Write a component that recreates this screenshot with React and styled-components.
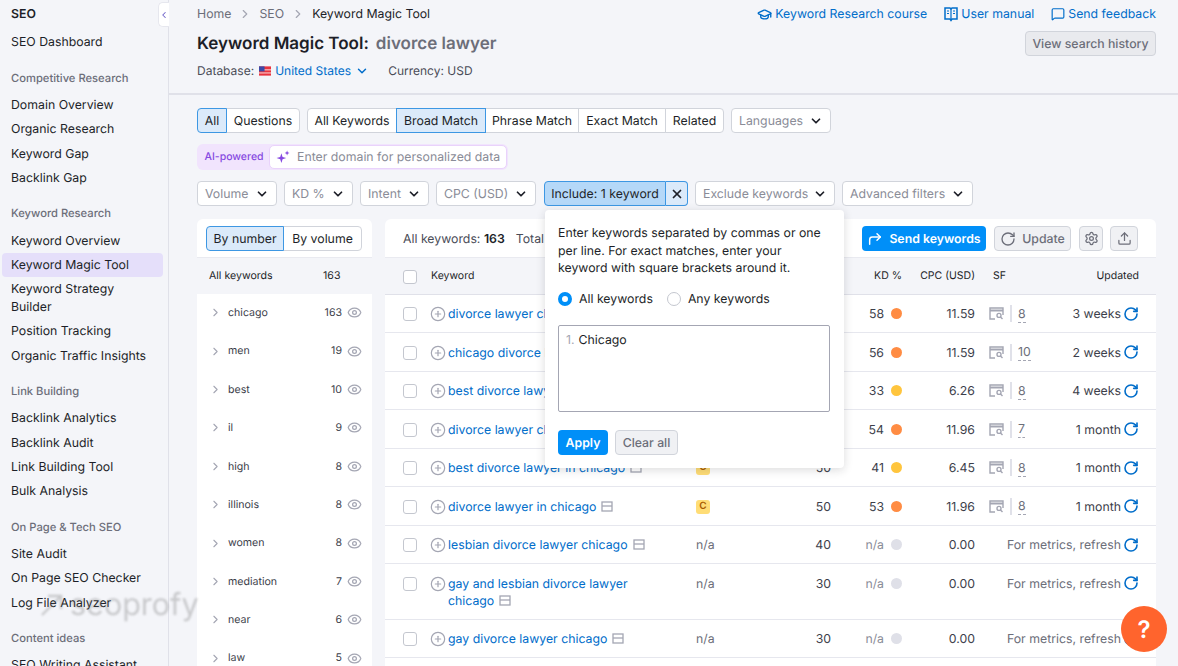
import React from 'react';
import styled, { createGlobalStyle } from 'styled-components';
import {
  ChevronDown,
  ChevronLeft,
  ChevronRight,
  CirclePlus,
  CornerUpRight,
  Eye,
  GraduationCap,
  MessageSquare,
  RotateCw,
  Settings,
  Upload,
  X,
} from 'lucide-react';

const BASE = '12.3px Inter, "Liberation Sans", sans-serif';

const GlobalStyle = createGlobalStyle`
  html, body {
    margin: 0;
    padding: 0;
    height: 100%;
    overflow: hidden;
  }
  body {
    background: #f4f5f9;
    color: #1d1f28;
    font: ${BASE};
    line-height: 17.5px;
    text-rendering: geometricPrecision;
  }
  button {
    text-rendering: geometricPrecision;
    white-space: nowrap;
  }
  * {
    box-sizing: border-box;
  }
`;

const Page = styled.div`
  position: relative;
  display: flex;
  width: 1178px;
  height: 666px;
  overflow: hidden;
`;

/* sidebar */
const Sidebar = styled.nav`
  position: relative;
  flex: 0 0 169px;
  padding: 5px 5px 0 2px;
  border-right: 1px solid #e0e1e9;
`;

const SideTitle = styled.div`
  padding-left: 9px;
  margin-bottom: 7.5px;
  font-weight: 600;
  color: #1d1f28;
`;

const SideLabel = styled.div`
  height: 16px;
  margin: 15.4px 0 6.8px;
  padding-left: 9px;
  font-size: 11.2px;
  line-height: 16px;
  font-weight: 500;
  color: #6c6e79;
`;

const SideItem = styled.a`
  display: block;
  padding: 3.45px 9px;
  border-radius: 4px;
  color: #1d1f28;
  background: ${(p) => (p.$active ? '#e5dffa' : 'transparent')};
`;

const DashboardItem = styled(SideItem)`
  margin-bottom: 1px;
`;

const CollapseTab = styled.button`
  position: absolute;
  top: 2px;
  right: -1px;
  width: 11px;
  height: 25px;
  padding: 0;
  display: flex;
  align-items: center;
  justify-content: center;
  border: 1px solid #e6e7ee;
  border-right: 0;
  border-radius: 5px 0 0 5px;
  background: #fff;
  color: #6f63c9;
`;

/* page header */
const Main = styled.main`
  flex: 1;
  min-width: 0;
`;

const Header = styled.header`
  height: 95px;
  padding: 0 22px 0 28px;
  border-bottom: 2px solid #e0e1e9;
`;

const HeaderTop = styled.div`
  display: flex;
  justify-content: space-between;
  align-items: center;
  height: 28px;
`;

const Crumbs = styled.div`
  display: flex;
  align-items: center;
  gap: 7px;
  color: #6c6e79;
`;

const CrumbCurrent = styled.span`
  color: #1d1f28;
`;

const HelpLinks = styled.div`
  display: flex;
  align-items: center;
  gap: 17px;
`;

const HelpLink = styled.a`
  display: flex;
  align-items: center;
  gap: 3px;
  color: #006dca;
`;

const HeaderBody = styled.div`
  display: flex;
  justify-content: space-between;
  align-items: flex-start;
  margin-top: 1px;
`;

const Title = styled.h1`
  margin: 0;
  height: 30px;
  font-size: 17px;
  line-height: 30px;
  font-weight: 600;
  color: #1d1f28;
`;

const TitleQuery = styled.span`
  margin-left: 7px;
  color: #6c6e79;
`;

const DbRow = styled.div`
  display: flex;
  align-items: center;
  height: 24px;
  font-size: 12px;
  color: #4a4c57;
`;

const DbLink = styled.a`
  display: flex;
  align-items: center;
  gap: 4px;
  margin: 0 19px 0 5px;
  color: #006dca;
`;

const HistoryButton = styled.button`
  width: 131px;
  height: 25px;
  margin-top: 2px;
  padding: 0;
  border: 1px solid #d1d4db;
  border-radius: 4px;
  background: #e9eaee;
  color: #6c6e79;
  font: 500 ${BASE};
`;

/* filters */
const Content = styled.div`
  padding: 13px 22px 0 28px;
`;

const FilterRow = styled.div`
  display: flex;
  align-items: center;
  gap: 7px;
  height: 25px;
  margin-bottom: ${(p) => p.$after || 11}px;
`;

const Segments = styled.div`
  display: flex;
  height: 25px;
`;

const Segment = styled.button`
  position: relative;
  z-index: ${(p) => (p.$active ? 1 : 0)};
  height: 25px;
  width: ${(p) => p.$w}px;
  padding: 0;
  margin-left: -1px;
  border: 1px solid ${(p) => (p.$active ? '#3d97e3' : '#d1d4db')};
  background: ${(p) => (p.$active ? '#dbeafa' : '#fff')};
  color: #1d1f28;
  font: ${BASE};
  &:first-child {
    margin-left: 0;
    border-radius: 4px 0 0 4px;
  }
  &:last-child {
    border-radius: 0 4px 4px 0;
  }
`;

const Select = styled.button`
  display: flex;
  align-items: center;
  justify-content: space-between;
  width: ${(p) => p.$w}px;
  height: 25px;
  padding: 0 7px;
  border: 1px solid #d1d4db;
  border-radius: 4px;
  background: #fff;
  color: #8a8c97;
  font: ${BASE};
  svg {
    color: #1d1f28;
  }
`;

const AiBar = styled.div`
  display: flex;
  align-items: center;
  width: 311px;
  height: 26px;
  padding: 1px;
  border-radius: 6px;
  background: #f1e4fd;
`;

const AiLabel = styled.span`
  flex: 0 0 71px;
  padding-left: 6.5px;
  font-size: 10.5px;
  font-weight: 500;
  color: #8649e1;
`;

const AiInput = styled.div`
  flex: 1;
  display: flex;
  align-items: center;
  gap: 7px;
  height: 24px;
  padding-left: 6px;
  border: 1px solid #e9d3fb;
  border-radius: 5px;
  background: #fff;
  color: #8a8c97;
`;

const IncludeWrap = styled.div`
  position: relative;
  display: flex;
  margin-left: 1px;
  height: 25px;
`;

const IncludeLabel = styled.button`
  width: 122px;
  height: 25px;
  padding: 0;
  border: 1px solid #3d97e3;
  border-radius: 4px 0 0 4px;
  background: #b5d8f8;
  color: #1d1f28;
  font: ${BASE};
`;

const IncludeClear = styled.button`
  display: flex;
  align-items: center;
  justify-content: center;
  width: 22px;
  height: 25px;
  padding: 0;
  border: 1px solid #3d97e3;
  border-left: 0;
  border-radius: 0 4px 4px 0;
  background: #dbeafa;
  color: #1d1f28;
`;

/* include popover */
const Popover = styled.div`
  position: absolute;
  z-index: 5;
  top: 29px;
  left: 1px;
  width: 299px;
  height: 258px;
  padding: 14px 14px 0 13px;
  border-radius: 4px;
  background: #fff;
  box-shadow: 0 2px 10px rgba(29, 31, 40, 0.16);
`;

const PopoverText = styled.p`
  margin: 0;
  color: #1d1f28;
`;

const RadioRow = styled.div`
  display: flex;
  gap: 14px;
  margin-top: 13.5px;
`;

const RadioLabel = styled.label`
  display: flex;
  align-items: center;
  gap: 7px;
`;

const Radio = styled.span`
  width: 14px;
  height: 14px;
  border-radius: 50%;
  background: #fff;
  border: ${(p) => (p.$on ? '4.5px solid #008ff8' : '1px solid #c4c7cf')};
`;

const KeywordBox = styled.div`
  height: 87px;
  margin-top: 17.5px;
  padding: 5px 7px;
  border: 1px solid #a4a6b3;
  border-radius: 2px;
`;

const LineNo = styled.span`
  margin-right: 4px;
  color: #a4a6b3;
`;

const PopoverActions = styled.div`
  display: flex;
  gap: 7px;
  margin-top: 18px;
`;

const PrimaryButton = styled.button`
  display: flex;
  align-items: center;
  justify-content: center;
  gap: 6px;
  width: ${(p) => p.$w}px;
  height: 25px;
  padding: 0;
  border: 0;
  border-radius: 4px;
  background: #008ff8;
  color: #fff;
  font: 600 ${BASE};
`;

const GhostButton = styled.button`
  display: flex;
  align-items: center;
  justify-content: center;
  gap: 6px;
  width: ${(p) => p.$w}px;
  height: 25px;
  padding: 0;
  border: 1px solid #d1d4db;
  border-radius: 4px;
  background: #f0f1f4;
  color: #6c6e79;
  font: 500 ${BASE};
`;

/* panels */
const Panels = styled.div`
  display: grid;
  grid-template-columns: 175px 771px;
  gap: 13px;
  margin-top: 13px;
`;

const Panel = styled.section`
  border-radius: 6px 6px 0 0;
  background: #fff;
  overflow: hidden;
`;

const PanelBar = styled.div`
  display: flex;
  align-items: center;
  height: 38px;
  padding: ${(p) => (p.$wide ? '1px 18px 0' : '0 9px')};
`;

const GroupHead = styled.div`
  display: flex;
  align-items: center;
  height: 36.5px;
  padding-left: 12px;
  border-top: 1px solid #e9eaf0;
  background: #f4f5f9;
  font-size: 10.6px;
`;

const GroupHeadName = styled.span`
  flex: 0 0 114px;
`;

const GroupRow = styled.div`
  display: flex;
  align-items: center;
  height: 38.4px;
  padding-left: 12px;
  font-size: 10.6px;
  color: #3c3e4a;
  svg {
    color: #a4a6b3;
  }
`;

const GroupName = styled.span`
  flex: 1;
  margin-left: 6px;
`;

const GroupCount = styled.span`
  margin-right: 5px;
`;

const GroupEye = styled(Eye)`
  margin-right: 10px;
`;

const TotalsText = styled.span`
  color: #4a4c57;
`;

const TotalsLabel = styled.span`
  margin-left: 11px;
  color: #4a4c57;
`;

const Strong = styled.b`
  font-weight: 600;
  color: #1d1f28;
`;

const BarActions = styled.div`
  display: flex;
  align-items: center;
  gap: 8px;
  margin-left: auto;
`;

const ExportButton = styled(GhostButton)`
  margin-left: -1px;
`;

const columns = '28px 265px 90px 45px 71px 73px 14px 51px 99px';

const TableHead = styled.div`
  display: grid;
  grid-template-columns: ${columns};
  align-items: center;
  height: 37.5px;
  padding-left: 18px;
  border-top: 1px solid #e9eaf0;
  border-bottom: 1px solid #e0e1e9;
  background: #f4f5f9;
  font-size: 10.5px;
`;

const HeadCell = styled.span`
  grid-column: ${(p) => p.$col};
  text-align: ${(p) => p.$align || 'left'};
  padding-left: ${(p) => p.$pad || 0}px;
`;

const Row = styled.div`
  display: grid;
  grid-template-columns: ${columns};
  align-items: start;
  padding: 10.5px 0 9.5px 18px;
  border-bottom: 1px solid #e6e7ee;
`;

const Check = styled.span`
  display: block;
  width: 14px;
  height: 14px;
  margin-top: 2px;
  border: 1px solid #c4c7cf;
  border-radius: 3px;
  background: #fff;
`;

const KeywordCell = styled.div`
  display: flex;
  gap: 2px;
  margin-left: -1px;
  padding-right: 30px;
  line-height: 17.3px;
  svg:first-child {
    flex: none;
    margin-top: 1px;
    color: #a4a6b3;
  }
`;

const KeywordLink = styled.a`
  color: #006dca;
`;

const CardIcon = styled.svg`
  display: inline-block;
  margin-left: 5px;
  vertical-align: -1px;
`;

const IntentBadge = styled.span`
  display: flex;
  align-items: center;
  justify-content: center;
  justify-self: start;
  width: 14px;
  height: 14px;
  margin-top: 2px;
  border-radius: 3px;
  background: #ffdd76;
  color: #a85a00;
  font-size: 10px;
  font-weight: 600;
`;

const Muted = styled.span`
  color: #6c6e79;
`;

const Num = styled.span`
  text-align: right;
  color: #3c3e4a;
`;

const KdCell = styled.span`
  display: flex;
  align-items: center;
  justify-content: flex-end;
  gap: 7px;
  height: 17.5px;
  color: ${(p) => (p.$empty ? '#8a8c97' : '#3c3e4a')};
`;

const KdDot = styled.i`
  width: 11px;
  height: 11px;
  border-radius: 50%;
  background: ${(p) => p.$color};
`;

const SfCell = styled.span`
  grid-column: 8;
  display: flex;
  align-items: center;
  height: 17.5px;
  svg {
    color: #a4a6b3;
  }
`;

const SfRule = styled.i`
  width: 2px;
  height: 17px;
  margin: 0 6px;
  background: #e0e1e9;
`;

const SfCount = styled.span`
  border-bottom: 1px dashed #a4a6b3;
  color: #6c6e79;
  line-height: 17px;
`;

const UpdatedCell = styled.span`
  grid-column: ${(p) => (p.$wide ? '7 / 10' : '9')};
  display: flex;
  justify-content: flex-end;
  align-items: center;
  gap: 2px;
  height: 17.5px;
  color: ${(p) => (p.$wide ? '#6c6e79' : '#3c3e4a')};
  svg {
    color: #006dca;
  }
`;

/* floating bits */
const Watermark = styled.div`
  position: absolute;
  z-index: 8;
  left: 40px;
  top: 585px;
  display: flex;
  align-items: center;
  gap: 6px;
  font-size: 30.5px;
  line-height: 40px;
  color: rgba(110, 110, 110, 0.32);
  filter: blur(0.8px);
  pointer-events: none;
`;

const HelpButton = styled.button`
  position: absolute;
  z-index: 9;
  left: 1121px;
  top: 606px;
  width: 46px;
  height: 46px;
  padding: 0;
  border: 0;
  border-radius: 50%;
  background: #ff642d;
  color: #fff;
  font: 600 24px Inter, sans-serif;
`;

const sideNav = [
  { label: 'Competitive Research', items: ['Domain Overview', 'Organic Research', 'Keyword Gap', 'Backlink Gap'] },
  { label: 'Keyword Research', items: ['Keyword Overview', 'Keyword Magic Tool', 'Keyword Strategy Builder', 'Position Tracking', 'Organic Traffic Insights'] },
  { label: 'Link Building', items: ['Backlink Analytics', 'Backlink Audit', 'Link Building Tool', 'Bulk Analysis'] },
  { label: 'On Page & Tech SEO', items: ['Site Audit', 'On Page SEO Checker', 'Log File Analyzer'] },
  { label: 'Content ideas', items: ['SEO Writing Assistant'] },
];

const groups = [
  ['chicago', 163], ['men', 19], ['best', 10], ['il', 9], ['high', 8],
  ['illinois', 8], ['women', 8], ['mediation', 7], ['near', 6], ['law', 5],
];

const ORANGE = '#ff8c43';
const YELLOW = '#ffc53d';
const GREY = '#dfe0e8';

const keywords = [
  { name: 'divorce lawyer chicago', volume: 70, kd: 58, dot: ORANGE, cpc: '11.59', sf: 8, updated: '3 weeks' },
  { name: 'chicago divorce lawyer', volume: 70, kd: 56, dot: ORANGE, cpc: '11.59', sf: 10, updated: '2 weeks' },
  { name: 'best divorce lawyer chicago', volume: 70, kd: 33, dot: YELLOW, cpc: '6.26', sf: 8, updated: '4 weeks' },
  { name: 'divorce lawyer chicago il', volume: 50, kd: 54, dot: ORANGE, cpc: '11.96', sf: 7, updated: '1 month' },
  { name: 'best divorce lawyer in chicago', volume: 50, kd: 41, dot: YELLOW, cpc: '6.45', sf: 8, updated: '1 month' },
  { name: 'divorce lawyer in chicago', volume: 50, kd: 53, dot: ORANGE, cpc: '11.96', sf: 8, updated: '1 month' },
  { name: 'lesbian divorce lawyer chicago', volume: 40 },
  { name: 'gay and lesbian divorce lawyer chicago', volume: 30 },
  { name: 'gay divorce lawyer chicago', volume: 30 },
];

const Chevron = () => <ChevronDown size={14} strokeWidth={3} />;

const Card = () => (
  <CardIcon width="12" height="11" viewBox="0 0 12 11" fill="none" stroke="#a4a6b3" strokeWidth="1.3">
    <rect x="1" y="1" width="10" height="9" />
    <path d="M1 5h10" />
  </CardIcon>
);

const SerpIcon = () => (
  <svg width="15" height="13" viewBox="0 0 15 13" fill="none" stroke="currentColor" strokeWidth="1.4">
    <path d="M6 12H1V1h13v7" />
    <path d="M1 3.5h13" strokeWidth="2" />
    <circle cx="10" cy="8.4" r="2" />
    <path d="M11.5 10l2 2" />
  </svg>
);

const BookIcon = () => (
  <svg width="14" height="15" viewBox="0 0 14 15" fill="none" stroke="currentColor" strokeWidth="1.5">
    <path d="M1 1h5l1 1 1-1h5v11H8l-1 1.5L6 12H1z" />
    <path d="M7 2v10M3 4h2M3 6.5h2M9 4h2M9 6.5h2" strokeWidth="1.2" />
  </svg>
);

const SparkIcon = () => (
  <svg width="14" height="14" viewBox="0 0 13 13" fill="#8649e1">
    <path d="M5 3l1.1 3.4L9.5 7.5 6.1 8.6 5 12 3.9 8.6.5 7.5l3.4-1.1z" />
    <path d="M10.3 .5l.6 1.7 1.6.6-1.6.6-.6 1.7-.6-1.7-1.6-.6 1.6-.6z" />
  </svg>
);

const Flag = () => (
  <svg width="12" height="10" viewBox="0 0 13 10">
    <rect width="13" height="10" fill="#e8343f" />
    <rect y="3" width="13" height="1.4" fill="#f5b5b8" />
    <rect y="6.4" width="13" height="1.4" fill="#f5b5b8" />
    <rect width="6" height="5.4" fill="#3a4aa8" />
  </svg>
);

const Arrow = () => (
  <svg width="24" height="22" viewBox="0 0 24 22" fill="none" stroke="currentColor" strokeWidth="2.4">
    <path d="M2 21L20 3M8 2h13v13" />
  </svg>
);

const KeywordRow = ({ row }) => (
  <Row>
    <Check />
    <KeywordCell>
      <CirclePlus size={16} strokeWidth={1.8} />
      <span>
        <KeywordLink>{row.name}</KeywordLink>
        <Card />
      </span>
    </KeywordCell>
    {row.kd ? <IntentBadge>C</IntentBadge> : <Muted>n/a</Muted>}
    <Num>{row.volume}</Num>
    {row.kd ? (
      <KdCell>{row.kd}<KdDot $color={row.dot} /></KdCell>
    ) : (
      <KdCell $empty>n/a<KdDot $color={GREY} /></KdCell>
    )}
    <Num>{row.cpc || '0.00'}</Num>
    {row.kd && (
      <SfCell>
        <SerpIcon />
        <SfRule />
        <SfCount>{row.sf}</SfCount>
      </SfCell>
    )}
    <UpdatedCell $wide={!row.kd}>
      {row.updated || 'For metrics, refresh'}
      <RotateCw size={16} strokeWidth={2.4} />
    </UpdatedCell>
  </Row>
);

const App = () => (
  <Page>
    <GlobalStyle />
    <Sidebar>
      <SideTitle>SEO</SideTitle>
      <DashboardItem>SEO Dashboard</DashboardItem>
      {sideNav.map((group) => (
        <div key={group.label}>
          <SideLabel>{group.label}</SideLabel>
          {group.items.map((item) => (
            <SideItem key={item} $active={item === 'Keyword Magic Tool'}>{item}</SideItem>
          ))}
        </div>
      ))}
      <CollapseTab><ChevronLeft size={12} strokeWidth={2.5} /></CollapseTab>
    </Sidebar>

    <Main>
      <Header>
        <HeaderTop>
          <Crumbs>
            <span>Home</span>
            <ChevronRight size={14} color="#a4a6b3" />
            <span>SEO</span>
            <ChevronRight size={14} color="#a4a6b3" />
            <CrumbCurrent>Keyword Magic Tool</CrumbCurrent>
          </Crumbs>
          <HelpLinks>
            <HelpLink><GraduationCap size={15} strokeWidth={2.2} />Keyword Research course</HelpLink>
            <HelpLink><BookIcon />User manual</HelpLink>
            <HelpLink><MessageSquare size={14} strokeWidth={2} />Send feedback</HelpLink>
          </HelpLinks>
        </HeaderTop>
        <HeaderBody>
          <div>
            <Title>Keyword Magic Tool:<TitleQuery>divorce lawyer</TitleQuery></Title>
            <DbRow>
              Database:
              <DbLink><Flag />United States<ChevronDown size={14} strokeWidth={2.5} /></DbLink>
              Currency: USD
            </DbRow>
          </div>
          <HistoryButton>View search history</HistoryButton>
        </HeaderBody>
      </Header>

      <Content>
        <FilterRow>
          <Segments>
            <Segment $w={30} $active>All</Segment>
            <Segment $w={74}>Questions</Segment>
          </Segments>
          <Segments>
            <Segment $w={90}>All Keywords</Segment>
            <Segment $w={90} $active>Broad Match</Segment>
            <Segment $w={94}>Phrase Match</Segment>
            <Segment $w={88}>Exact Match</Segment>
            <Segment $w={59}>Related</Segment>
          </Segments>
          <Select $w={100}>Languages<Chevron /></Select>
        </FilterRow>
        <FilterRow $after={12}>
          <AiBar>
            <AiLabel>AI-powered</AiLabel>
            <AiInput><SparkIcon />Enter domain for personalized data</AiInput>
          </AiBar>
        </FilterRow>
        <FilterRow $after={1}>
          <Select $w={80}>Volume<Chevron /></Select>
          <Select $w={69}>KD %<Chevron /></Select>
          <Select $w={69}>Intent<Chevron /></Select>
          <Select $w={100}>CPC (USD)<Chevron /></Select>
          <IncludeWrap>
            <IncludeLabel>Include: 1 keyword</IncludeLabel>
            <IncludeClear><X size={14} strokeWidth={3} /></IncludeClear>
            <Popover>
              <PopoverText>
                Enter keywords separated by commas or one per line. For exact matches, enter your keyword with square brackets around it.
              </PopoverText>
              <RadioRow>
                <RadioLabel><Radio $on />All keywords</RadioLabel>
                <RadioLabel><Radio />Any keywords</RadioLabel>
              </RadioRow>
              <KeywordBox><LineNo>1.</LineNo>Chicago</KeywordBox>
              <PopoverActions>
                <PrimaryButton $w={50}>Apply</PrimaryButton>
                <GhostButton $w={63}>Clear all</GhostButton>
              </PopoverActions>
            </Popover>
          </IncludeWrap>
          <Select $w={140}>Exclude keywords<Chevron /></Select>
          <Select $w={131}>Advanced filters<Chevron /></Select>
        </FilterRow>

        <Panels>
          <Panel>
            <PanelBar>
              <Segments>
                <Segment $w={78} $active>By number</Segment>
                <Segment $w={79}>By volume</Segment>
              </Segments>
            </PanelBar>
            <GroupHead>
              <GroupHeadName>All keywords</GroupHeadName>
              <span>163</span>
            </GroupHead>
            {groups.map(([name, count]) => (
              <GroupRow key={name}>
                <ChevronRight size={13} />
                <GroupName>{name}</GroupName>
                <GroupCount>{count}</GroupCount>
                <GroupEye size={15} strokeWidth={2} />
              </GroupRow>
            ))}
          </Panel>

          <Panel>
            <PanelBar $wide>
              <TotalsText>All keywords: <Strong>163</Strong></TotalsText>
              <TotalsLabel>Total</TotalsLabel>
              <BarActions>
                <PrimaryButton $w={124}><CornerUpRight size={16} strokeWidth={2.2} />Send keywords</PrimaryButton>
                <GhostButton $w={77}><RotateCw size={16} />Update</GhostButton>
                <GhostButton $w={24}><Settings size={15} /></GhostButton>
                <ExportButton $w={28}><Upload size={15} /></ExportButton>
              </BarActions>
            </PanelBar>
            <TableHead>
              <Check />
              <HeadCell $col={2}>Keyword</HeadCell>
              <HeadCell $col={5} $align="right">KD %</HeadCell>
              <HeadCell $col={6} $align="right">CPC (USD)</HeadCell>
              <HeadCell $col={8} $pad={4}>SF</HeadCell>
              <HeadCell $col={9} $align="right">Updated</HeadCell>
            </TableHead>
            {keywords.map((row) => <KeywordRow key={row.name} row={row} />)}
          </Panel>
        </Panels>
      </Content>
    </Main>

    <Watermark><Arrow />seoprofy</Watermark>
    <HelpButton>?</HelpButton>
  </Page>
);

export default App;
